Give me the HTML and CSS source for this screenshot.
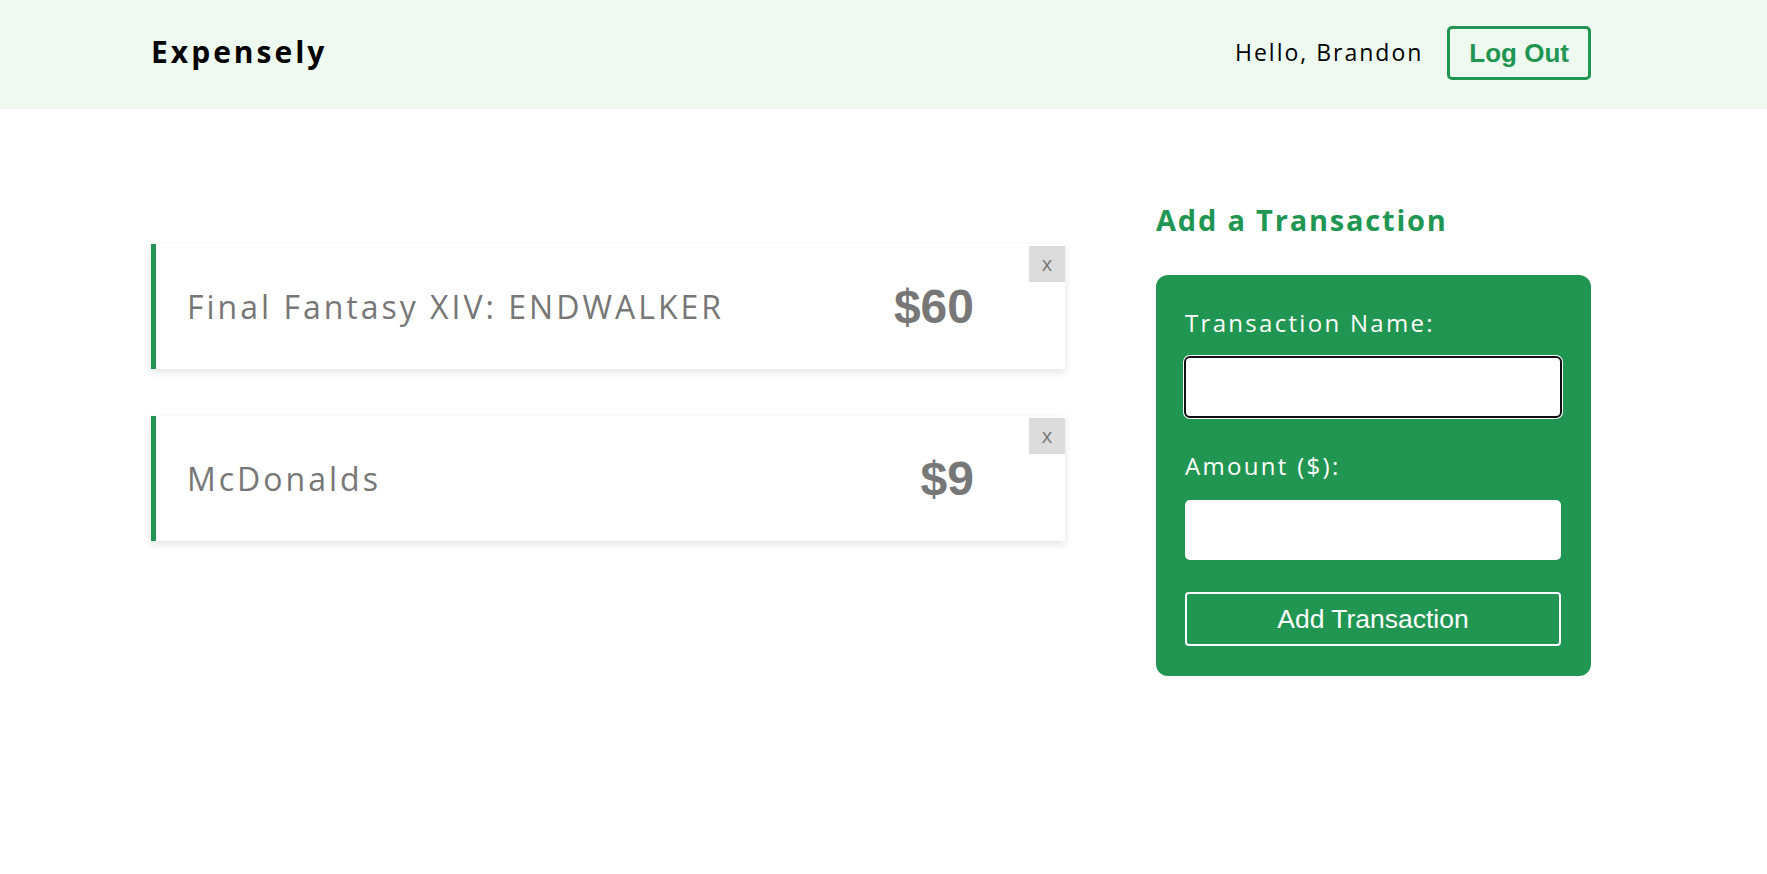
FILE: index.html
```html
<!DOCTYPE html>
<html lang="en">
<head>
<meta charset="utf-8">
<title>Expensely</title>
<link rel="stylesheet" href="styles.css">
</head>
<body>
<header class="topbar">
  <div class="container topbar-inner">
    <div class="logo">Expensely</div>
    <div class="user">
      <span class="greeting">Hello, Brandon</span>
      <button class="logout">Log Out</button>
    </div>
  </div>
</header>
<main class="container main">
  <section class="list">
    <div class="card">
      <span class="card-name">Final Fantasy XIV: ENDWALKER</span>
      <span class="card-amount">$60</span>
      <button class="delete">x</button>
    </div>
    <div class="card">
      <span class="card-name">McDonalds</span>
      <span class="card-amount">$9</span>
      <button class="delete">x</button>
    </div>
  </section>
  <aside class="side">
    <h2 class="side-title">Add a Transaction</h2>
    <form class="panel">
      <label class="field-label" for="tname">Transaction Name:</label>
      <input class="field field-focus" id="tname" type="text">
      <label class="field-label" for="tamount">Amount ($):</label>
      <input class="field" id="tamount" type="number">
      <button type="button" class="submit">Add Transaction</button>
    </form>
  </aside>
</main>
</body>
</html>
```

FILE: styles.css
```css
* { box-sizing: border-box; }

body {
  margin: 0;
  font-family: "Open Sans", "Noto Sans", sans-serif;
  background: #fff;
  color: #000;
}

.container {
  width: 1440px;
  margin-left: 151px;
}

.topbar {
  background: #eef9ef;
  height: 109px;
}

.topbar-inner {
  height: 100%;
  display: flex;
  align-items: center;
  justify-content: space-between;
}

.logo {
  font-size: 30px;
  font-weight: 700;
  letter-spacing: 3px;
  margin-top: -6px;
}

.user {
  display: flex;
  align-items: center;
  gap: 24px;
}

.greeting {
  font-size: 23px;
  letter-spacing: 2px;
  margin-top: -6px;
}

.logout {
  font-family: "Liberation Sans", Arial, sans-serif;
  font-weight: 700;
  font-size: 26px;
  line-height: 32px;
  color: #219653;
  background: transparent;
  border: 3px solid #219653;
  border-radius: 5px;
  padding: 8px 19px;
  margin-top: -4px;
}

.main {
  display: grid;
  grid-template-columns: 914px 435px;
  justify-content: space-between;
  padding-top: 90px;
}

.list {
  padding-top: 45px;
  display: flex;
  flex-direction: column;
  gap: 47px;
}

.card {
  position: relative;
  height: 125px;
  background: #fff;
  border-left: 5px solid #219653;
  box-shadow: 0 3px 8px rgba(0, 0, 0, 0.12);
  display: flex;
  align-items: center;
  justify-content: space-between;
  padding: 0 91px 0 31px;
  color: #777;
}

.card-name {
  font-size: 32px;
  font-weight: 400;
  letter-spacing: 3px;
}

.card-amount {
  font-family: "Liberation Sans", Arial, sans-serif;
  font-weight: 700;
  font-size: 48px;
}

.delete {
  position: absolute;
  top: 2px;
  right: 0;
  width: 36px;
  height: 36px;
  border: none;
  background: #dcdcdc;
  color: #777;
  font-family: "Open Sans", sans-serif;
  font-size: 20px;
  line-height: 36px;
  padding: 0;
}

.side-title {
  margin: 0;
  font-size: 29px;
  line-height: 42px;
  font-weight: 700;
  color: #219653;
  letter-spacing: 1.8px;
}

.panel {
  margin-top: 34px;
  background: #219653;
  border-radius: 12px;
  padding: 31px 30px 30px 29px;
  display: flex;
  flex-direction: column;
}

.field-label {
  color: #fff;
  font-size: 24px;
  line-height: 34px;
  margin-bottom: 17px;
  letter-spacing: 2.3px;
}

.field {
  height: 60px;
  border: none;
  border-radius: 5px;
  background: #fff;
  margin-bottom: 32px;
  font-size: 20px;
  padding: 0 12px;
}

.field-focus {
  outline: 2px solid #101010;
  outline-offset: -1px;
  box-shadow: 0 0 0 2px #fff;
}

.submit {
  height: 54px;
  background: transparent;
  border: 2px solid #fff;
  border-radius: 4px;
  color: #fff;
  font-family: "Liberation Sans", Arial, sans-serif;
  font-size: 26.5px;
}
```
